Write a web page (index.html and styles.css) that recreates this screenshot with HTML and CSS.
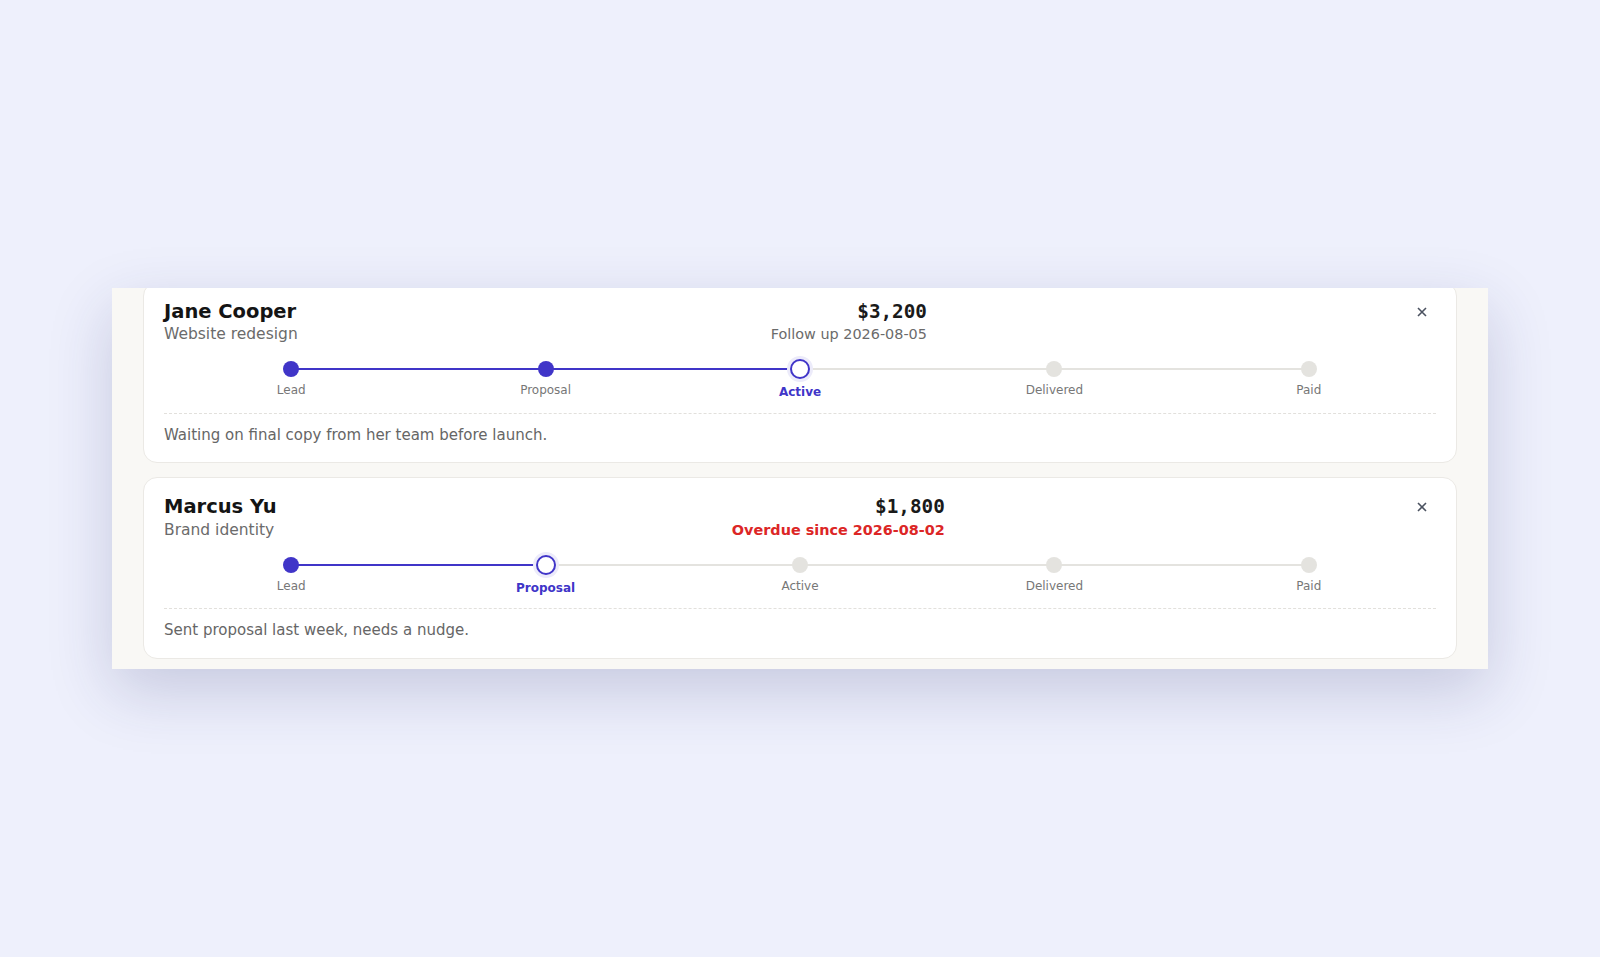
FILE: index.html
```html
<!doctype html>
<html>
<head>
  <meta charset="utf-8" />
  <meta name="viewport" content="width=device-width, initial-scale=1.0" />
  <title>Deals</title>
  <link rel="stylesheet" href="styles.css">
</head>
<body>
  <div class="deals">
    <div class="deal-list">

      <article class="deal">
        <header class="deal-head">
          <div class="deal-who">
            <div class="deal-name">Jane Cooper</div>
            <div class="deal-project">Website redesign</div>
          </div>
          <div class="deal-money">
            <div class="deal-amount">$3,200</div>
            <div class="deal-due">Follow up 2026-08-05</div>
          </div>
          <button class="deal-close" title="Remove">
            <svg width="10" height="10" viewBox="0 0 10 10"><path d="M1 1L9 9M9 1L1 9" /></svg>
          </button>
        </header>
        <ol class="stages">
          <li class="stage done"><span class="stage-dot"></span><span class="stage-label">Lead</span></li>
          <li class="stage done"><span class="stage-dot"></span><span class="stage-label">Proposal</span></li>
          <li class="stage current"><span class="stage-dot"></span><span class="stage-label">Active</span></li>
          <li class="stage"><span class="stage-dot"></span><span class="stage-label">Delivered</span></li>
          <li class="stage"><span class="stage-dot"></span><span class="stage-label">Paid</span></li>
        </ol>
        <p class="deal-note">Waiting on final copy from her team before launch.</p>
      </article>

      <article class="deal">
        <header class="deal-head">
          <div class="deal-who">
            <div class="deal-name">Marcus Yu</div>
            <div class="deal-project">Brand identity</div>
          </div>
          <div class="deal-money">
            <div class="deal-amount">$1,800</div>
            <div class="deal-due overdue">Overdue since 2026-08-02</div>
          </div>
          <button class="deal-close" title="Remove">
            <svg width="10" height="10" viewBox="0 0 10 10"><path d="M1 1L9 9M9 1L1 9" /></svg>
          </button>
        </header>
        <ol class="stages">
          <li class="stage done"><span class="stage-dot"></span><span class="stage-label">Lead</span></li>
          <li class="stage current"><span class="stage-dot"></span><span class="stage-label">Proposal</span></li>
          <li class="stage"><span class="stage-dot"></span><span class="stage-label">Active</span></li>
          <li class="stage"><span class="stage-dot"></span><span class="stage-label">Delivered</span></li>
          <li class="stage"><span class="stage-dot"></span><span class="stage-label">Paid</span></li>
        </ol>
        <p class="deal-note">Sent proposal last week, needs a nudge.</p>
      </article>

    </div>
  </div>
</body>
</html>
```

FILE: styles.css
```css
body {
  font-family: 'DejaVu Sans', 'Noto Sans', sans-serif;
  background: #eef0fc;
  color: #141414;
  margin: 0;
  min-height: 100vh;
  display: flex;
  align-items: center;
  justify-content: center;
}
.deals {
  width: 1376px;
  height: 381px;
  box-sizing: border-box;
  padding: 0 31px;
  overflow: hidden;
  background: #f9f8f5;
  box-shadow: 0 22px 60px rgba(40, 46, 110, 0.2);
}
/* list is scrolled a few px down */
.deal-list {
  margin-top: -6px;
  display: flex;
  flex-direction: column;
  gap: 14px;
}
.deal {
  background: #fff;
  border: 1px solid #ebe9e5;
  border-radius: 14px;
  padding: 17px 20px 16px;
}
.deal-head {
  display: flex;
  justify-content: space-between;
  align-items: flex-start;
}
.deal-name {
  font-size: 19.5px;
  font-weight: bold;
  line-height: 1.2;
}
.deal-project {
  font-size: 15.5px;
  line-height: 23px;
  color: #6b6b6b;
}
.deal-money {
  text-align: right;
}
.deal-amount {
  font-family: 'DejaVu Sans Mono', 'Liberation Mono', monospace;
  font-size: 19.3px;
  font-weight: bold;
  line-height: 1.2;
  color: #1a1a1a;
}
.deal-due {
  font-size: 14.4px;
  line-height: 23px;
  color: #6b6b6b;
}
.deal-due.overdue {
  color: #dc2626;
  font-weight: bold;
}
.deal-close {
  width: 28px;
  height: 24px;
  margin-left: 8px;
  padding: 0;
  border: 0;
  background: transparent;
  cursor: pointer;
  display: flex;
  align-items: center;
  justify-content: center;
}
.deal-close svg path {
  stroke: #4b5260;
  stroke-width: 1.6;
  fill: none;
}

.stages {
  list-style: none;
  margin: 15px 0 0;
  padding: 0 0 12px;
  display: grid;
  grid-template-columns: repeat(5, 1fr);
  border-bottom: 1px dashed #e2e0dc;
}
.stage {
  position: relative;
  display: flex;
  flex-direction: column;
  align-items: center;
}
/* connector from the previous stage's dot */
.stage::before {
  content: "";
  position: absolute;
  top: 7px;
  right: 50%;
  width: 100%;
  height: 2px;
  background: #e4e3df;
}
.stage:first-child::before {
  display: none;
}
.stage.done::before, .stage.current::before {
  background: #4035c8;
}
.stage-dot {
  position: relative;
  z-index: 1;
  width: 16px;
  height: 16px;
  border-radius: 50%;
  background: #e4e3df;
}
.stage.done .stage-dot {
  background: #4035c8;
}
.stage.current .stage-dot {
  width: 20px;
  height: 20px;
  margin-top: -2px;
  box-sizing: border-box;
  background: #fff;
  border: 2px solid #4035c8;
  box-shadow: 0 0 0 3px #ecebfa;
}
.stage-label {
  margin-top: 6px;
  font-size: 12px;
  line-height: 1.3;
  color: #777;
}
.stage.current .stage-label {
  color: #4035c8;
  font-weight: bold;
}
.deal-note {
  margin: 0;
  padding-top: 10px;
  font-size: 15px;
  line-height: 22.5px;
  color: #666;
}
```
